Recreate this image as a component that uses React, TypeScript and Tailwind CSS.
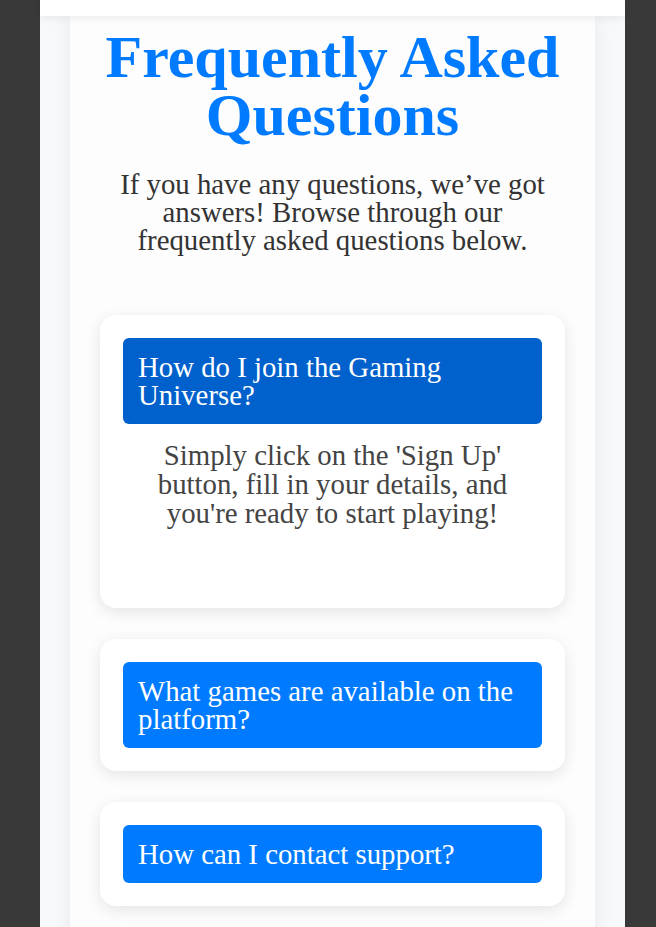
import React from "react";

const faqs = [
  {
    q: "How do I join the Gaming Universe?",
    a: "Simply click on the 'Sign Up' button, fill in your details, and you're ready to start playing!",
    open: true,
  },
  { q: "What games are available on the platform?", a: "", open: false },
  { q: "How can I contact support?", a: "", open: false },
];

export default function App() {
  return (
    <div
      className="min-h-[927px] bg-[#393939] flex"
      style={{ fontFamily: '"Liberation Serif", "Times New Roman", serif' }}
    >
      <div className="ml-[40px] w-[585px] min-h-[927px] bg-[#f8f9fa] flex flex-col">
        <div className="relative z-10 h-[16px] bg-white shadow-[0_2px_10px_rgba(0,0,0,0.08)]" />
        <section className="mx-[30px] flex-1 bg-[#fdfdfd] shadow-[0_0_20px_rgba(0,0,0,0.07)] px-[30px] pb-[40px]">
          <h1 className="mt-[12px] text-center text-[60px] leading-[58px] font-bold text-[#007bff]">
            Frequently Asked Questions
          </h1>
          <p className="mt-[26px] px-[20px] text-center text-[28.8px] leading-[28px] text-[#333]">
            If you have any questions, we’ve got answers! Browse through our frequently asked questions below.
          </p>
          <div className="mt-[61px] flex flex-col gap-[31px]">
            {faqs.map((f, i) => (
              <div
                key={i}
                className="bg-white rounded-[16px] p-[23px] shadow-[0_4px_16px_rgba(0,0,0,0.1)]"
              >
                <div
                  className={
                    "rounded-[6px] px-[15px] py-[15px] text-white text-[28.8px] leading-[28px] " +
                    (f.open ? "bg-[#0060cc]" : "bg-[#007bff]")
                  }
                >
                  {f.q}
                </div>
                {f.open && (
                  <div className="h-[161px] pt-[17px] px-[30px] text-center text-[28.8px] leading-[29px] text-[#444]">
                    {f.a}
                  </div>
                )}
              </div>
            ))}
          </div>
        </section>
      </div>
    </div>
  );
}
